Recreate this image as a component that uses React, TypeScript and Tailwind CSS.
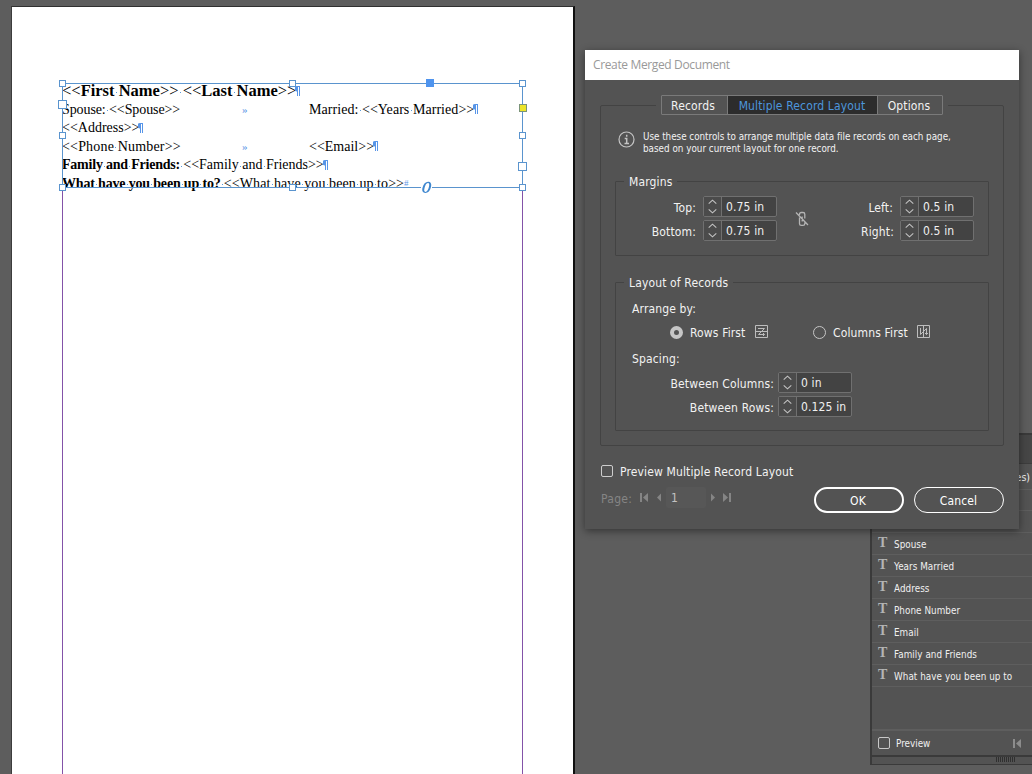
import { Fragment, type ReactNode } from "react";

const fields = ["Spouse", "Years Married", "Address", "Phone Number", "Email", "Family and Friends", "What have you been up to"];

/** Story text with the hidden-character dot drawn in each space and light angle brackets. */
function Story({ text, className = "" }: { text: string; className?: string }) {
  return (
    <span className={className}>
      {text.split(/( |<<|>>)/).map((part, i) => {
        if (part === " ") {
          return (
            <span key={i} className="bg-[linear-gradient(#5b9bd8,#5b9bd8)] bg-[length:1px_1px] bg-[position:50%_60%] bg-no-repeat">
              {" "}
            </span>
          );
        }
        if (part === "<<" || part === ">>") {
          return (
            <span key={i} className="font-normal">
              {part}
            </span>
          );
        }
        return <Fragment key={i}>{part}</Fragment>;
      })}
    </span>
  );
}

function Pilcrow() {
  return (
    <svg className="-ml-px inline-block shrink-0" width="5" height="10" viewBox="0 0 5 10">
      <path d="M2 0h3v10H4V1H3v9H2V5.5A2.7 2.7 0 0 1 2 0Z" fill="#5795e8" />
    </svg>
  );
}

function Handle({ className }: { className: string }) {
  return <span className={"absolute border border-[#5a94ce] bg-white " + className} />;
}

function Spinner({ value }: { value: string }) {
  return (
    <div className="flex h-[21px] w-[74px] shrink-0 rounded-[2px] border border-[#707070] bg-[#434343]">
      <div className="flex w-[18px] items-center justify-center border-r border-[#707070] bg-[#4b4b4b]">
        <svg width="9" height="15" viewBox="0 0 9 15" fill="none" stroke="#c4c4c4" strokeWidth="1.1">
          <path d="M.7 4.600 4.500 1.200l3.800 3.400M.7 10.400l3.800 3.400 3.800-3.400" />
        </svg>
      </div>
      <span className="whitespace-nowrap pl-[4px] pt-px leading-[19px] text-[#f0f0f0]">{value}</span>
    </div>
  );
}

function Group({ title, className, children }: { title: string; className: string; children: ReactNode }) {
  return (
    <section className={"ml-[14px] w-[374px] rounded-[1px] border border-[#434343] " + className}>
      <h3 className="-mt-[9px] ml-[8px] w-fit bg-[#535353] px-[5px] leading-[18px]">{title}</h3>
      {children}
    </section>
  );
}

function FieldRow({ label, value, labelClass }: { label: string; value: string; labelClass: string }) {
  return (
    <div className="flex h-[21px]">
      <span className={"whitespace-nowrap pt-[2px] text-right leading-[21px] " + labelClass}>{label}</span>
      <Spinner value={value} />
    </div>
  );
}

function DocumentPage() {
  return (
    <div className="absolute left-[11px] top-[6px] h-[768px] w-[564px] border-l border-r-2 border-t border-l-[#3c3c3c] border-r-[#101010] border-t-[#303030] bg-white">
      <div className="absolute left-[50px] top-[180px] h-[590px] w-[461px] border-x border-[#8352a8]" />
      <div className="absolute left-[50px] top-[75px] w-[470px] whitespace-nowrap font-['Liberation_Serif',serif] text-[14px] text-black">
        <div className="flex h-[18px] items-center">
          <Story text="<<First Name>> <<Last Name>>" className="text-[16.5px] font-bold leading-[18px]" />
          <Pilcrow />
        </div>
        <div className="flex h-[18.5px] items-center">
          <Story text="Spouse: <<Spouse>>" className="w-[180px] tracking-[-0.1px]" />
          <span className="w-[67px] text-[11px] text-[#5b95e5]">»</span>
          <Story text="Married: <<Years Married>>" className="tracking-[0.05px]" />
          <Pilcrow />
        </div>
        <div className="flex h-[18.5px] items-center">
          <Story text="<<Address>>" />
          <Pilcrow />
        </div>
        <div className="flex h-[18.5px] items-center">
          <Story text="<<Phone Number>>" className="w-[180px] tracking-[0.18px]" />
          <span className="w-[67px] text-[11px] text-[#5b95e5]">»</span>
          <Story text="<<Email>>" />
          <Pilcrow />
        </div>
        <div className="flex h-[18.5px] items-center">
          <Story text="Family and Friends: " className="whitespace-pre font-bold tracking-[-0.22px]" />
          <Story text="<<Family and Friends>>" />
          <Pilcrow />
        </div>
        <div className="flex h-[18.5px] items-center">
          <Story text="What have you been up to? " className="whitespace-pre font-bold tracking-[-0.18px]" />
          <Story text="<<What have you been up to>>" className="tracking-[0.07px]" />
          <span className="text-[9px] text-[#5b95e5]">#</span>
        </div>
      </div>
      <div className="absolute left-[50px] top-[76px] h-[105px] w-[461px] border border-[#5a94ce]">
        <Handle className="-left-[4px] -top-[4px] h-[7px] w-[7px]" />
        <Handle className="left-[226px] -top-[4px] h-[7px] w-[7px]" />
        <Handle className="left-[456px] -top-[4px] h-[7px] w-[7px]" />
        <span className="absolute -top-[5px] left-[363px] h-[8px] w-[8px] bg-[#4f94ee]" />
        <Handle className="-left-[5px] top-[16px] h-[9px] w-[9px]" />
        <Handle className="-left-[4px] top-[48px] h-[7px] w-[7px]" />
        <Handle className="left-[456px] top-[48px] h-[7px] w-[7px]" />
        <span className="absolute left-[456px] top-[20px] h-[8px] w-[8px] border border-[#7b9479] bg-[#ede52a]" />
        <Handle className="left-[455px] top-[78px] h-[9px] w-[9px]" />
        <Handle className="-left-[4px] top-[100px] h-[7px] w-[7px]" />
        <Handle className="left-[226px] top-[100px] h-[7px] w-[7px]" />
        <Handle className="left-[456px] top-[100px] h-[7px] w-[7px]" />
        <span className="absolute left-[358px] top-[97px] flex h-[13px] w-[11px] items-center justify-center bg-white">
          <svg width="11" height="13" viewBox="0 0 11 13" fill="#3f87cf" fillRule="evenodd">
            <path d="M7 .8c2.700 0 3.800 2 3 5.200-.9 3.800-3 6-5.600 6C1.800 12 .7 9.900 1.500 6.800 2.400 3 4.600.8 7 .8ZM6.800 1.900C5.400 2 4.300 3.800 3.600 6.800c-.7 2.800-.5 4.100.9 4.100S7.200 9 7.900 6c.7-2.900.4-4.200-1.100-4.100Z" />
          </svg>
        </span>
      </div>
    </div>
  );
}

function DataPanel() {
  return (
    <aside className="absolute left-[870px] top-[433px] flex h-[332px] w-[164px] flex-col border-2 border-b border-[#3a3a3a] bg-[#535353] text-[9.8px] text-[#f0f0f0]">
      <div className="h-[29px] shrink-0 border-b border-[#3d3d3d] bg-[#464646]" />
      <div className="h-[26px] shrink-0 border-b border-[#5e5e5e] pr-[2px] text-right text-[10.5px] leading-[27px]">(No data files)</div>
      <div className="h-[21px] shrink-0 border-b border-[#5e5e5e]" />
      <div className="h-[22px] shrink-0 border-b border-[#5e5e5e]" />
      {fields.map((f) => (
        <div key={f} className="flex h-[22px] shrink-0 items-center border-b border-[#5e5e5e] pl-[6px]">
          <span className="-mt-px w-[16px] font-['Liberation_Serif',serif] text-[14px] font-bold leading-[18px] text-[#b4b4b4]">T</span>
          <span className="whitespace-nowrap pt-[3px] tracking-[0.05px]">{f}</span>
        </div>
      ))}
      <div className="h-[44px] shrink-0 border-b-2 border-[#5e5e5e]" />
      <div className="flex h-[26px] shrink-0 items-center border-b-2 border-[#3a3a3a] pl-[6px]">
        <span className="h-[12px] w-[12px] rounded-[2px] border border-[#c8c8c8]" />
        <span className="ml-[6px] w-[116px] pt-[2px]">Preview</span>
        <svg width="10" height="9" viewBox="0 0 10 9" fill="#8c8c8c">
          <path d="M1 0h2v9H1zM9 0v9L4 4.500z" />
        </svg>
      </div>
      <div className="flex flex-1 items-start gap-px pl-[124px]">
        {[0, 1, 2, 3, 4, 5, 6, 7, 8, 9].map((n) => (
          <span key={n} className="h-[5px] w-px bg-[#303030]" />
        ))}
      </div>
    </aside>
  );
}

function MergeDialog() {
  return (
    <div className="absolute left-[585px] top-[50px] flex h-[479px] w-[434px] flex-col bg-[#535353] font-['DejaVu_Sans_Condensed','DejaVu_Sans',sans-serif] text-[12px] tracking-[0.14px] text-[#f2f2f2] shadow-[0_2px_8px_rgba(0,0,0,0.45)]">
      <div className="h-[30px] shrink-0 bg-white pl-[8px] font-['Open_Sans',sans-serif] text-[12px] leading-[30px] tracking-[-0.36px] text-[#999]">Create Merged Document</div>
      <div className="ml-[15px] mt-[25px] h-[341px] w-[404px] shrink-0 rounded-[2px] border border-[#434343]">
        <div className="mx-auto -mt-[11px] flex w-fit bg-[#535353] px-[5px]">
          <div className="flex h-[20px] w-[282px] rounded-[1px] border border-[#7a7a7a] text-center leading-[20px]">
            <div className="w-[65px] pr-[3px]">Records</div>
            <div className="w-[151px] border-x border-[#7a7a7a] bg-[#2c2c2c] pr-px text-[#4d96dc]">Multiple Record Layout</div>
            <div className="w-[64px] pr-[2px]">Options</div>
          </div>
        </div>
        <div className="ml-[17px] mt-[15px] flex h-[24px]">
          <svg className="mt-px shrink-0" width="17" height="17" viewBox="0 0 17 17" fill="none" stroke="#c4c4c4">
            <circle cx="8.500" cy="8.500" r="7.500" strokeWidth="1.200" />
            <path d="M8.700 3.700v2M6.700 7.500h2v5M6.500 12.500h4.500" strokeWidth="1.500" />
          </svg>
          <p className="ml-[8px] whitespace-nowrap pt-px text-[9.8px] leading-[12px] tracking-[-0.02px]">
            Use these controls to arrange multiple data file records on each page,
            <br />
            <span className="tracking-normal">based on your current layout for one record.</span>
          </p>
        </div>
        <Group title="Margins" className="mt-[27px] h-[75px]">
          <div className="mt-[5px] flex">
            <div className="flex flex-col gap-[3px]">
              <FieldRow label="Top:" value="0.75 in" labelClass="mr-[7px] w-[80px]" />
              <FieldRow label="Bottom:" value="0.75 in" labelClass="mr-[7px] w-[80px]" />
            </div>
            <svg className="ml-[18px] mt-[15px] shrink-0" width="14" height="16" viewBox="0 0 14 16" fill="none" stroke="#b4b4b4" strokeWidth="1.300">
              <path d="M4.500 4V3.300Q4.500 1.500 6.300 1.500H8Q9.800 1.500 9.800 3.300V7.500M4.500 6.500V12.700Q4.500 14.300 6.300 14.300H8Q9.800 14.300 9.800 12.700V11.500M7.200 5.500v5M1 1.500l12 12.500" />
            </svg>
            <div className="flex flex-col gap-[3px]">
              <FieldRow label="Left:" value="0.5 in" labelClass="mr-[7px] w-[84px]" />
              <FieldRow label="Right:" value="0.5 in" labelClass="mr-[6px] w-[85px]" />
            </div>
          </div>
        </Group>
        <Group title="Layout of Records" className="mt-[26px] h-[149px]">
          <p className="ml-[16px] mt-[7px] leading-[20px]">Arrange by:</p>
          <div className="ml-[54px] mt-[4px] flex h-[20px] items-center whitespace-nowrap">
            <span className="-mt-px h-[13px] w-[13px] rounded-full border-[4.5px] border-[#c6c6c6]" />
            <span className="ml-[7px] w-[65px]">Rows First</span>
            <svg className="-mt-[3px]" width="13" height="13" viewBox="0 0 13 13" fill="none" stroke="#bdbdbd">
              <path d="M.5.5h12v12H.500zM.5 6.500h12M3 3.500h6.500L3.500 9.500h6M8 8l1.500 1.500L8 11" />
            </svg>
            <span className="-mt-px ml-[45px] h-[13px] w-[13px] rounded-full border border-[#c6c6c6]" />
            <span className="ml-[7px] w-[84px]">Columns First</span>
            <svg className="-mt-[3px]" width="13" height="13" viewBox="0 0 13 13" fill="none" stroke="#bdbdbd">
              <path d="M.5.5h12v12H.500zM6.500.5v12M3.500 3v6.500L9.500 3.500v6M8 8l1.500 1.500L11 8" />
            </svg>
          </div>
          <p className="ml-[16px] mt-[6px] leading-[20px]">Spacing:</p>
          <div className="mt-[3px] flex flex-col gap-[3px]">
            <FieldRow label="Between Columns:" value="0 in" labelClass="mr-[4px] w-[158px]" />
            <FieldRow label="Between Rows:" value="0.125 in" labelClass="mr-[4px] w-[158px]" />
          </div>
        </Group>
      </div>
      <div className="ml-[16px] mt-[16px] flex h-[18px] items-center">
        <span className="h-[12px] w-[12px] rounded-[2px] border border-[#cdcdcd]" />
        <span className="ml-[7px] pt-px">Preview Multiple Record Layout</span>
      </div>
      <div className="ml-[16px] mt-[7px] flex h-[26px] items-start text-[#858585]">
        <span className="w-[39px] pt-px leading-[23px] tracking-[0.3px]">Page:</span>
        <svg className="mt-[6px]" width="93" height="10" viewBox="0 0 93 10" fill="#858585">
          <path d="M0 0h2v9H0zM8 0v9L3 4.500zM21 .5v8L17 4.500zM71 .5v8l4-4zM83 0v9l5-4.500zM89 0h2v9h-2z" />
        </svg>
        <span className="-ml-[67px] h-[21px] w-[40px] rounded-[2px] bg-[#575757] pl-[5px] pt-px leading-[21px] text-[#c2c2c2]">1</span>
        <button className="ml-[108px] h-[26px] w-[90px] rounded-full border-2 border-white pr-[2px] pt-px leading-[22px] text-white">OK</button>
        <button className="ml-[10px] h-[26px] w-[90px] rounded-full border border-white pr-px pt-px leading-[24px] text-white">Cancel</button>
      </div>
    </div>
  );
}

export default function App() {
  return (
    <main className="relative h-[774px] w-[1032px] overflow-hidden bg-[#5d5d5d] font-['DejaVu_Sans_Condensed','DejaVu_Sans',sans-serif]">
      <DocumentPage />
      <DataPanel />
      <MergeDialog />
    </main>
  );
}
